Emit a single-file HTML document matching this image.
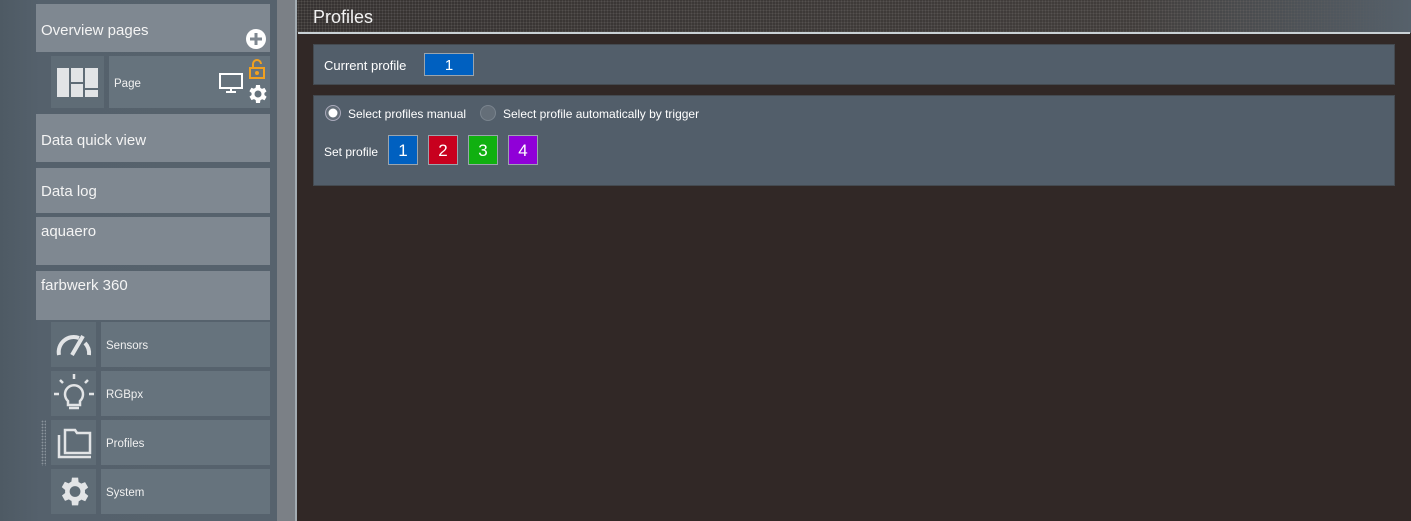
<!DOCTYPE html>
<html><head><meta charset="utf-8"><style>
*{margin:0;padding:0;box-sizing:border-box}
body{width:1411px;height:521px;overflow:hidden;background:#312826;font-family:"Segoe UI","Liberation Sans",sans-serif;position:relative;color:#fff}
.a{position:absolute}
.side{left:0;top:0;width:277px;height:521px;background:linear-gradient(90deg,#4e5a64 0,#55616c 40px,#56626d 100%)}
.big{background:#7f8891;font-size:15px;padding-left:5px;color:#f4f4f4}
.ib{background:#5f6c76}
.lb{background:#66737d;font-size:11.5px;color:#f0f0f0;padding-left:5px;padding-top:3px;display:flex;align-items:center}
.panel{background:#525e6a;border:1px solid #444a50}
.btn{border:1px solid #9aa4ad;color:#fff;text-align:center;font-size:17px}
</style></head><body>
<div class="a side"></div>
<div class="a" style="left:277px;top:0;width:18px;height:521px;background:#7b8086"></div>
<div class="a" style="left:295px;top:0;width:2px;height:521px;background:#a3acb2"></div>
<div class="a" style="left:297px;top:0;width:1114px;height:33px;background:linear-gradient(90deg,#353130 0,#403c3a 75%,#56616b 100%)"></div>
<div class="a" style="left:297px;top:0;width:1114px;height:33px;background-image:radial-gradient(#6a6664 0.9px,transparent 1.1px);background-size:3px 3px;opacity:.55;-webkit-mask:linear-gradient(90deg,#000 85%,transparent 100%)"></div>
<div class="a" style="left:298px;top:32px;width:1112px;height:2px;background:#c9d1d5"></div>
<div class="a" style="left:313px;top:7px;font-size:18px;color:#f2f2f2">Profiles</div>

<div class="a big" style="left:36px;top:4px;width:234px;height:48px;padding-top:18px">Overview pages</div>
<svg class="a" style="left:245px;top:28px" width="22" height="22"><circle cx="11" cy="11" r="10" fill="#fff"/><path d="M11 5v12M5 11h12" stroke="#7f8891" stroke-width="3"/></svg>
<div class="a ib" style="left:51px;top:56px;width:53px;height:52px"></div>
<svg class="a" style="left:57px;top:68px" width="42" height="30" fill="#e2e4e6"><rect x="0" y="0" width="12" height="29"/><rect x="14" y="0" width="12" height="14"/><rect x="28" y="0" width="13" height="20"/><rect x="14" y="16" width="12" height="13"/><rect x="28" y="22" width="13" height="7"/></svg>
<div class="a lb" style="left:109px;top:56px;width:161px;height:52px">Page</div>
<svg class="a" style="left:218px;top:72px" width="26" height="22" fill="none" stroke="#fff" stroke-width="2"><rect x="2" y="2" width="22" height="14"/><path d="M13 16v3M8 20h10"/></svg>
<svg class="a" style="left:248px;top:59px" width="18" height="20" fill="none" stroke="#f0a020" stroke-width="2"><path d="M5 8V5a4 4 0 0 1 8 0"/><rect x="2" y="9" width="14" height="10"/><circle cx="9" cy="14" r="1" fill="#f0a020"/></svg>
<svg class="a" style="left:245px;top:82px" width="24" height="24" viewBox="0 0 24 24" fill="#fff"><path d="M19.4 13a7.5 7.5 0 0 0 0-2l2.1-1.6-2-3.5-2.5 1a7 7 0 0 0-1.7-1L15 3h-4l-.4 2.7a7 7 0 0 0-1.7 1l-2.5-1-2 3.5L6.6 11a7.5 7.5 0 0 0 0 2l-2.1 1.6 2 3.5 2.5-1a7 7 0 0 0 1.7 1L11 21h4l.4-2.7a7 7 0 0 0 1.7-1l2.5 1 2-3.5zM13 15.5A3.5 3.5 0 1 1 13 8.5a3.5 3.5 0 0 1 0 7z"/></svg>

<div class="a big" style="left:36px;top:114px;width:234px;height:48px;padding-top:18px">Data quick view</div>
<div class="a big" style="left:36px;top:168px;width:234px;height:45px;padding-top:15px">Data log</div>
<div class="a big" style="left:36px;top:217px;width:234px;height:48px;padding-top:6px">aquaero</div>
<div class="a big" style="left:36px;top:271px;width:234px;height:49px;padding-top:6px">farbwerk 360</div>

<div class="a ib" style="left:51px;top:322px;width:45px;height:45px"></div>
<svg class="a" style="left:55px;top:333px" width="38" height="24" fill="none" stroke="#e2e4e6" stroke-width="4"><path d="M4 22A15 15 0 0 1 24 5M30 10a15 15 0 0 1 4 12"/><path d="M17 22L28 3" stroke-width="4"/></svg>
<div class="a lb" style="left:101px;top:322px;width:169px;height:45px">Sensors</div>
<div class="a ib" style="left:51px;top:371px;width:45px;height:45px"></div>
<svg class="a" style="left:53px;top:373px" width="42" height="40" fill="none" stroke="#e2e4e6" stroke-width="2.5"><path d="M21 1v5M7 7l3 3M35 7l-3 3M1 21h5M36 21h5"/><path d="M15 28a9 9 0 1 1 12 0v4H15z"/><path d="M16 35h10"/></svg>
<div class="a lb" style="left:101px;top:371px;width:169px;height:45px">RGBpx</div>
<div class="a" style="left:41px;top:420px;width:5px;height:46px;background-image:radial-gradient(#8a949c 0.7px,transparent 1px);background-size:3px 3px"></div>
<div class="a ib" style="left:51px;top:420px;width:45px;height:45px"></div>
<svg class="a" style="left:54px;top:427px" width="40" height="32" fill="none" stroke="#e2e4e6" stroke-width="2.5"><path d="M5 8v22h32"/><path d="M11 3h10l2 3h13v20H11z"/></svg>
<div class="a lb" style="left:101px;top:420px;width:169px;height:45px">Profiles</div>
<div class="a ib" style="left:51px;top:469px;width:45px;height:45px"></div>
<svg class="a" style="left:55px;top:473px" width="37" height="37" viewBox="0 0 24 24" fill="#e2e4e6"><path d="M19.4 13a7.5 7.5 0 0 0 0-2l2.1-1.6-2-3.5-2.5 1a7 7 0 0 0-1.7-1L15 3h-4l-.4 2.7a7 7 0 0 0-1.7 1l-2.5-1-2 3.5L6.6 11a7.5 7.5 0 0 0 0 2l-2.1 1.6 2 3.5 2.5-1a7 7 0 0 0 1.7 1L11 21h4l.4-2.7a7 7 0 0 0 1.7-1l2.5 1 2-3.5zM13 15.5A3.5 3.5 0 1 1 13 8.5a3.5 3.5 0 0 1 0 7z"/></svg>
<div class="a lb" style="left:101px;top:469px;width:169px;height:45px">System</div>

<div class="a panel" style="left:313px;top:44px;width:1082px;height:41px"></div>
<div class="a" style="left:324px;top:58px;font-size:13px">Current profile</div>
<div class="a btn" style="left:424px;top:53px;width:50px;height:23px;background:#0060c0;font-size:15px;line-height:23px">1</div>

<div class="a panel" style="left:313px;top:95px;width:1082px;height:91px"></div>
<svg class="a" style="left:324px;top:104px" width="18" height="18"><circle cx="9" cy="9" r="7.5" fill="#646e78" stroke="#aab" stroke-width="1"/><circle cx="9" cy="9" r="4.5" fill="#fff"/></svg>
<div class="a" style="left:348px;top:107px;font-size:12px">Select profiles manual</div>
<svg class="a" style="left:479px;top:104px" width="18" height="18"><circle cx="9" cy="9" r="7.5" fill="#646e78" stroke="#7a848e" stroke-width="1"/></svg>
<div class="a" style="left:503px;top:107px;font-size:12px">Select profile automatically by trigger</div>
<div class="a" style="left:324px;top:145px;font-size:12px">Set profile</div>
<div class="a btn" style="left:388px;top:135px;width:30px;height:30px;background:#0060c0;line-height:30px">1</div>
<div class="a btn" style="left:428px;top:135px;width:30px;height:30px;background:#c8001e;line-height:30px">2</div>
<div class="a btn" style="left:468px;top:135px;width:30px;height:30px;background:#10b010;line-height:30px">3</div>
<div class="a btn" style="left:508px;top:135px;width:30px;height:30px;background:#9000d8;line-height:30px">4</div>
</body></html>
